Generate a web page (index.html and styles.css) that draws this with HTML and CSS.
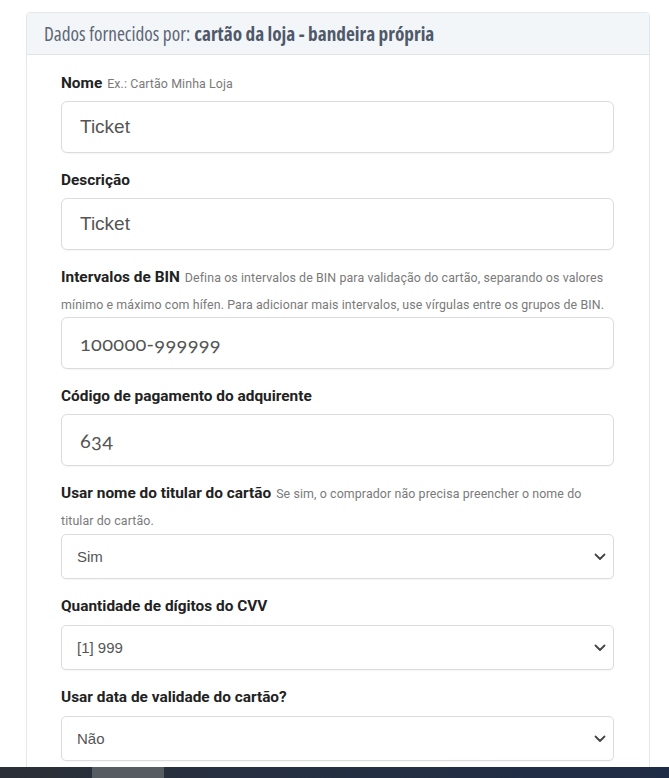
FILE: index.html
```html
<!DOCTYPE html>
<html lang="pt-BR">
<head>
<meta charset="utf-8">
<title>Dados fornecidos</title>
<link rel="stylesheet" href="styles.css">
</head>
<body>
<div class="card">
  <div class="card-header">Dados fornecidos por: <strong>cartão da loja - bandeira própria</strong></div>
  <div class="card-body">
    <div class="group">
      <div class="label"><b>Nome</b> <span class="help">Ex.: Cartão Minha Loja</span></div>
      <input class="field" type="text" value="Ticket">
    </div>
    <div class="group">
      <div class="label"><b>Descrição</b></div>
      <input class="field" type="text" value="Ticket">
    </div>
    <div class="group">
      <div class="label"><b>Intervalos de BIN</b> <span class="help">Defina os intervalos de BIN para validação do cartão, separando os valores mínimo e máximo com hífen. Para adicionar mais intervalos, use vírgulas entre os grupos de BIN.</span></div>
      <input class="field num" type="text" value="100000-999999">
    </div>
    <div class="group">
      <div class="label"><b>Código de pagamento do adquirente</b></div>
      <input class="field num" type="text" value="634">
    </div>
    <div class="group">
      <div class="label"><b>Usar nome do titular do cartão</b> <span class="help">Se sim, o comprador não precisa preencher o nome do titular do cartão.</span></div>
      <div class="select-wrap">
        <select class="select"><option>Sim</option><option>Não</option></select>
        <svg class="chev" width="12" height="8" viewBox="0 0 12 8"><path d="M1.5 1.5 L6 6 L10.5 1.5" fill="none" stroke="#444" stroke-width="1.8" stroke-linecap="round" stroke-linejoin="round"/></svg>
      </div>
    </div>
    <div class="group">
      <div class="label"><b>Quantidade de dígitos do CVV</b></div>
      <div class="select-wrap">
        <select class="select"><option>[1] 999</option></select>
        <svg class="chev" width="12" height="8" viewBox="0 0 12 8"><path d="M1.5 1.5 L6 6 L10.5 1.5" fill="none" stroke="#444" stroke-width="1.8" stroke-linecap="round" stroke-linejoin="round"/></svg>
      </div>
    </div>
    <div class="group">
      <div class="label"><b>Usar data de validade do cartão?</b></div>
      <div class="select-wrap">
        <select class="select"><option>Não</option><option>Sim</option></select>
        <svg class="chev" width="12" height="8" viewBox="0 0 12 8"><path d="M1.5 1.5 L6 6 L10.5 1.5" fill="none" stroke="#444" stroke-width="1.8" stroke-linecap="round" stroke-linejoin="round"/></svg>
      </div>
    </div>
  </div>
</div>
<div class="taskbar"><span class="task-item"></span></div>
</body>
</html>
```
FILE: styles.css
```css
html, body {
  margin: 0;
  background: #ffffff;
}
body {
  padding: 12px 19px 0 26px;
  font-family: Roboto, "Liberation Sans", sans-serif;
}
.card {
  border: 1px solid #e4e7eb;
  border-radius: 4px;
  background: #fff;
}
.card-header {
  height: 42px;
  box-sizing: border-box;
  padding: 0 17px;
  display: flex;
  align-items: center;
  gap: 4px;
  background: #f3f6f9;
  border-bottom: 1px solid #e1e5ea;
  border-radius: 4px 4px 0 0;
  font-family: "Open Sans", sans-serif;
  font-stretch: 77%;
  font-size: 19.3px;
  color: #5d6675;
}
.card-header strong {
  color: #4f596a;
  font-weight: 700;
}
.card-body {
  padding: 12px 35px 30px 34px;
}
.group {
  margin-bottom: 11px;
}
.label {
  font-size: 12px;
  line-height: 22px;
  color: #7a7a7a;
}
.label b {
  font-size: 15.4px;
  line-height: 33px;
  color: #222;
  font-weight: 700;
  margin-right: 2px;
}
.help {
  font-size: 12.4px;
  letter-spacing: 0.1px;
  color: #7a7a7a;
}
.field {
  display: block;
  width: 100%;
  box-sizing: border-box;
  height: 52px;
  margin-top: 1px;
  padding: 0 18px;
  border: 1px solid #dcdcdc;
  border-radius: 6px;
  box-shadow: 0 1px 2px rgba(0,0,0,0.04);
  font-family: "Liberation Sans", Arial, sans-serif;
  font-size: 19px;
  color: #555;
  background: #fff;
  outline: none;
}
.field.num {
  font-family: Lato, "Open Sans", sans-serif;
  font-variant-numeric: oldstyle-nums;
  font-size: 20px;
  letter-spacing: 0.3px;
}
.select-wrap {
  position: relative;
  margin-top: 2px;
}
.select {
  display: block;
  width: 100%;
  box-sizing: border-box;
  height: 45px;
  padding: 0 40px 0 15px;
  border: 1px solid #dcdcdc;
  border-radius: 5px;
  box-shadow: 0 1px 2px rgba(0,0,0,0.04);
  background: #fff;
  font-family: "Liberation Sans", Arial, sans-serif;
  font-size: 15px;
  color: #555;
  -webkit-appearance: none;
  appearance: none;
  outline: none;
}
.chev {
  position: absolute;
  right: 8px;
  top: 19px;
}
.taskbar {
  position: fixed;
  left: 0;
  right: 0;
  bottom: 0;
  height: 11px;
  background: linear-gradient(90deg, #2b2f36 0%, #263042 40%, #1f2c45 100%);
}
.task-item {
  position: absolute;
  left: 92px;
  top: 0;
  width: 72px;
  height: 11px;
  background: #575b62;
}
```
